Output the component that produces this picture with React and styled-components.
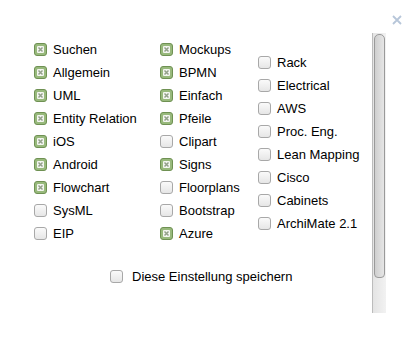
import React from 'react'
import styled, { createGlobalStyle } from 'styled-components'

const Global = createGlobalStyle`
  html, body { margin: 0; padding: 0; background: #fff; }
  body { font-family: "Liberation Sans", Arial, sans-serif; color: #000; }
`

const columns = [
  {
    offset: 0,
    width: 126,
    items: [
      ['Suchen', true], ['Allgemein', true], ['UML', true], ['Entity Relation', true],
      ['iOS', true], ['Android', true], ['Flowchart', true], ['SysML', false], ['EIP', false],
    ],
  },
  {
    offset: 0,
    width: 98,
    items: [
      ['Mockups', true], ['BPMN', true], ['Einfach', true], ['Pfeile', true],
      ['Clipart', false], ['Signs', true], ['Floorplans', false], ['Bootstrap', false], ['Azure', true],
    ],
  },
  {
    offset: 13,
    width: 110,
    items: [
      ['Rack', false], ['Electrical', false], ['AWS', false], ['Proc. Eng.', false],
      ['Lean Mapping', false], ['Cisco', false], ['Cabinets', false], ['ArchiMate 2.1', false],
    ],
  },
]

function Check({ checked }) {
  return (
    <Box $checked={checked}>
      {checked && (
        <svg width="7" height="7" viewBox="0 0 7 7">
          <path d="M1.5 1.5L5.5 5.5M5.5 1.5L1.5 5.5" stroke="#93a08a" strokeWidth="1.5" />
        </svg>
      )}
    </Box>
  )
}

export default function App() {
  return (
    <>
      <Global />
      <Dialog>
        <Close>
          <svg width="10" height="10" viewBox="0 0 10 10">
            <path d="M1 1L9 9M9 1L1 9" stroke="#b7c6d9" strokeWidth="1.8" />
          </svg>
        </Close>
        <Body>
          <Content>
            <Columns>
              {columns.map((col, i) => (
                <Column key={i} $offset={col.offset} $width={col.width}>
                  {col.items.map(([label, checked]) => (
                    <Row key={label}>
                      <Check checked={checked} />
                      <span>{label}</span>
                    </Row>
                  ))}
                </Column>
              ))}
            </Columns>
            <Save>
              <Check checked={false} />
              <span>Diese Einstellung speichern</span>
            </Save>
          </Content>
          <Scrollbar>
            <Thumb />
          </Scrollbar>
        </Body>
      </Dialog>
    </>
  )
}

const Dialog = styled.div`
  width: 419px;
  height: 343px;
  position: relative;
  background: #fff;
  padding-top: 33px;
  box-sizing: border-box;
`

const Close = styled.div`
  position: absolute;
  top: 15px;
  left: 392px;
  width: 10px;
  height: 10px;
  display: flex;
`

const Body = styled.div`
  display: flex;
  height: 280px;
`

const Content = styled.div`
  width: 372px;
  padding-left: 34px;
  padding-top: 8px;
  box-sizing: border-box;
  display: flex;
  flex-direction: column;
`

const Columns = styled.div`
  display: flex;
`

const Column = styled.div`
  width: ${p => p.$width}px;
  padding-top: ${p => p.$offset}px;
  display: flex;
  flex-direction: column;
  gap: 10px;
`

const Row = styled.label`
  display: flex;
  align-items: center;
  gap: 6px;
  height: 13px;
  font-size: 13px;
  line-height: 13px;
  white-space: nowrap;

  & > span { position: relative; top: 2px; }
`

const Save = styled(Row)`
  margin-top: 30px;
  margin-left: 76px;
  gap: 9px;
`

const Box = styled.span`
  width: 13px;
  height: 13px;
  box-sizing: border-box;
  border-radius: 3px;
  flex: none;
  display: flex;
  align-items: center;
  justify-content: center;
  border: 1px solid ${p => (p.$checked ? '#6f9153' : '#a8a8a8')};
  background: ${p => (p.$checked ? '#98b97c' : 'linear-gradient(#fafafa, #e6e6e6)')};

  & > svg {
    background: #f4f6f1;
    border-radius: 1px;
  }
`

const Scrollbar = styled.div`
  width: 14px;
  height: 280px;
  box-sizing: border-box;
  border-left: 1px solid #bcbcbc;
  background: linear-gradient(to right, #e4e4e4, #f2f2f2);
  padding: 1px 1px 0 1px;
`

const Thumb = styled.div`
  height: 244px;
  border: 1px solid #9a9a9a;
  border-radius: 5px 5px 4px 4px;
  background: linear-gradient(to right, #cfcfcf, #e6e6e6);
  box-sizing: border-box;
`
